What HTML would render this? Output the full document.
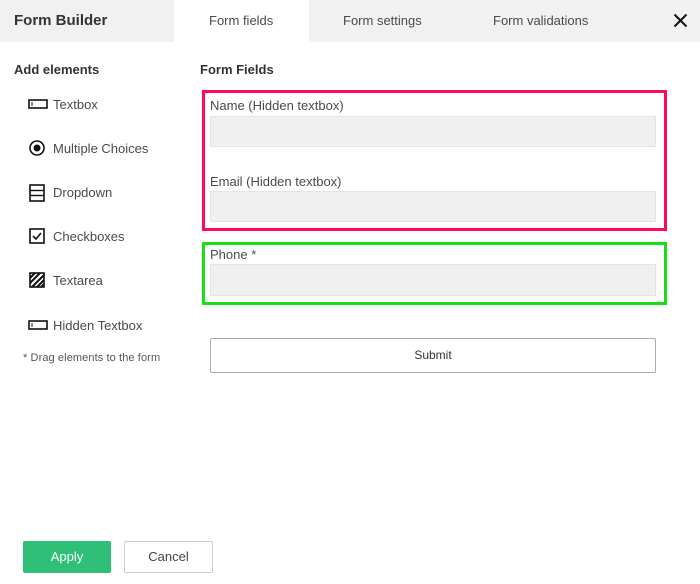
<!DOCTYPE html>
<html><head><style>
*{margin:0;padding:0;box-sizing:border-box}
body{width:700px;height:584px;background:#fff;font-family:"Liberation Sans",sans-serif;position:relative;overflow:hidden;color:#333}
.a{position:absolute}
.hdr{left:0;top:0;width:700px;height:42px;background:#f1f1f1}
.t{font-size:13px;color:#4a4a4a;top:13px}
.item{left:53px;font-size:13px;color:#4a4a4a}
.in{left:210px;width:446px;background:#f0f0f0;border:1px solid #e4e4e4}
.lbl{left:210px;font-size:13px;color:#4a4a4a}
</style></head><body>
<div class="a hdr"></div>
<div class="a" style="left:14px;top:12px;font-size:15px;font-weight:bold;color:#333">Form Builder</div>
<div class="a" style="left:174px;top:0;width:135px;height:42px;background:#fff"></div>
<div class="a t" style="left:209px">Form fields</div>
<div class="a t" style="left:343px">Form settings</div>
<div class="a t" style="left:493px">Form validations</div>
<svg class="a" style="left:673px;top:13px" width="15" height="15"><path d="M1.5 1.5L13.5 13.5M13.5 1.5L1.5 13.5" stroke="#111" stroke-width="2"/></svg>

<div class="a" style="left:14px;top:62px;font-size:13px;font-weight:bold;color:#333">Add elements</div>
<div class="a" style="left:200px;top:62px;font-size:13px;font-weight:bold;color:#333">Form Fields</div>

<svg class="a" style="left:28px;top:98px" width="20" height="12"><rect x="1" y="2" width="18" height="8" fill="none" stroke="#111" stroke-width="1.6"/><line x1="4" y1="4" x2="4" y2="8" stroke="#111"/></svg>
<div class="a item" style="top:97px">Textbox</div>
<svg class="a" style="left:29px;top:140px" width="16" height="16"><circle cx="8" cy="8" r="7" fill="none" stroke="#111" stroke-width="1.6"/><circle cx="8" cy="8" r="3.5" fill="#111"/></svg>
<div class="a item" style="top:141px">Multiple Choices</div>
<svg class="a" style="left:29px;top:184px" width="16" height="18"><rect x="1" y="1" width="14" height="16" fill="none" stroke="#111" stroke-width="1.6"/><line x1="1" y1="6.5" x2="15" y2="6.5" stroke="#111" stroke-width="1.4"/><line x1="1" y1="11.5" x2="15" y2="11.5" stroke="#111" stroke-width="1.4"/></svg>
<div class="a item" style="top:185px">Dropdown</div>
<svg class="a" style="left:29px;top:228px" width="16" height="16"><rect x="1" y="1" width="14" height="14" fill="none" stroke="#111" stroke-width="1.6"/><path d="M4 8l3 3 5-6" fill="none" stroke="#111" stroke-width="1.6"/></svg>
<div class="a item" style="top:229px">Checkboxes</div>
<svg class="a" style="left:29px;top:272px" width="16" height="16"><rect x="1" y="1" width="14" height="14" fill="none" stroke="#111" stroke-width="1.6"/><path d="M1 6L6 1M1 11L11 1M3 15L15 3M8 15L15 8M12 15l3-3" stroke="#111" stroke-width="2"/></svg>
<div class="a item" style="top:273px">Textarea</div>
<svg class="a" style="left:28px;top:319px" width="20" height="12"><rect x="1" y="2" width="18" height="8" fill="none" stroke="#111" stroke-width="1.6"/><line x1="4" y1="4" x2="4" y2="8" stroke="#111"/></svg>
<div class="a item" style="top:318px">Hidden Textbox</div>
<div class="a" style="left:23px;top:352px;font-size:11px;color:#555;letter-spacing:0.1px">* Drag elements to the form</div>

<div class="a" style="left:202px;top:90px;width:465px;height:141px;border:3px solid #ff0a57"></div>
<div class="a lbl" style="top:98px">Name (Hidden textbox)</div>
<div class="a in" style="top:116px;height:31px"></div>
<div class="a lbl" style="top:174px">Email (Hidden textbox)</div>
<div class="a in" style="top:191px;height:31px"></div>
<div class="a" style="left:202px;top:242px;width:465px;height:63px;border:3px solid #14e014"></div>
<div class="a lbl" style="top:247px">Phone *</div>
<div class="a in" style="top:264px;height:32px"></div>
<div class="a" style="left:210px;top:338px;width:446px;height:35px;border:1px solid #aaa;border-radius:2px;font-size:12px;color:#333;text-align:center;line-height:33px">Submit</div>

<div class="a" style="left:23px;top:541px;width:88px;height:32px;background:#2fbf76;border-radius:2px;color:#fff;font-size:13px;text-align:center;line-height:32px">Apply</div>
<div class="a" style="left:124px;top:541px;width:89px;height:32px;border:1px solid #ccc;border-radius:2px;color:#444;font-size:13px;text-align:center;line-height:30px">Cancel</div>
</body></html>
